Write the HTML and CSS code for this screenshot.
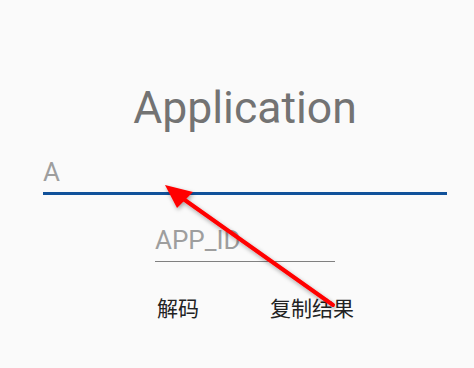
FILE: index.html
```html
<!DOCTYPE html>
<html>
<head>
<meta charset="utf-8">
<link rel="stylesheet" href="styles.css">
</head>
<body>
<div class="screen">
  <div class="content">
    <div class="title">Application</div>
    <div class="field-main"><span class="placeholder">A</span></div>
    <div class="field-id"><span class="placeholder">APP_ID</span></div>
    <div class="buttons">
      <div class="btn">解码</div>
      <div class="btn">复制结果</div>
    </div>
  </div>
  <svg class="annotation" width="474" height="368" viewBox="0 0 474 368">
    <defs>
      <filter id="shadow" x="-20%" y="-20%" width="140%" height="140%">
        <feDropShadow dx="1" dy="2" stdDeviation="2" flood-color="#000" flood-opacity="0.35"/>
      </filter>
    </defs>
    <g filter="url(#shadow)" fill="#ff0000" stroke="none">
      <line x1="333" y1="305" x2="182" y2="198" stroke="#ff0000" stroke-width="4" stroke-linecap="round"/>
      <polygon points="165,185 193,192 177,208"/>
    </g>
  </svg>
</div>
</body>
</html>
```

FILE: styles.css
```css
html, body {
  margin: 0;
  padding: 0;
  background: #fafafa;
}

.screen {
  position: relative;
  width: 474px;
  height: 368px;
  overflow: hidden;
  background: #fafafa;
  font-family: Roboto, "Noto Sans CJK SC", sans-serif;
}

.content {
  display: flex;
  flex-direction: column;
  padding: 82px 27px 0 43px;
}

.title {
  text-align: center;
  font-size: 44.5px;
  line-height: 53px;
  color: #737373;
}

.field-main {
  margin-top: 22px;
  font-size: 26px;
  line-height: 30px;
  padding-bottom: 5px;
  border-bottom: 3px solid #10519a;
}

.placeholder {
  color: #9e9e9e;
}

.field-id {
  align-self: center;
  width: 180px;
  margin-top: 30px;
  font-size: 26px;
  line-height: 30px;
  padding-bottom: 6px;
  border-bottom: 1px solid #808080;
}

.buttons {
  display: flex;
  justify-content: center;
  margin-top: 30px;
}

.btn {
  width: 134px;
  text-align: center;
  font-family: "Noto Sans CJK SC", sans-serif;
  font-size: 21px;
  line-height: 30px;
  color: #222222;
}

.annotation {
  position: absolute;
  left: 0;
  top: 0;
}
```
